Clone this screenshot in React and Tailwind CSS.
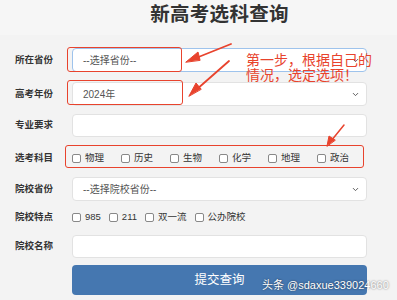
import { ChevronDown } from 'lucide-react';

const font = { fontFamily: '"Liberation Sans", "Noto Sans CJK SC", sans-serif' };

function Label({ children }) {
  return <div className="w-[57px] shrink-0 whitespace-nowrap text-[9.5px] font-bold text-[#333]">{children}</div>;
}

function Select({ value, focused }) {
  return (
    <div
      className={`flex h-[24px] flex-1 items-center justify-between rounded-[4px] border bg-white pl-[10px] pr-[6px] text-[10px] text-[#555] ${
        focused ? 'border-[#9ec3ec]' : 'border-[#e2e2e2]'
      }`}
    >
      <span>{value}</span>
      <ChevronDown size={9} strokeWidth={2.5} className="text-[#555]" />
    </div>
  );
}

function Box({ label, className = '' }) {
  return (
    <label className={`flex items-center gap-[4px] whitespace-nowrap text-[9.5px] text-[#333] ${className}`}>
      <span className="h-[9px] w-[9px] shrink-0 rounded-[2px] border border-[#888] bg-white" />
      {label}
    </label>
  );
}

export default function App() {
  return (
    <div className="relative h-[300px] w-[397px] overflow-hidden bg-[#f3f3f3]" style={font}>
      <div className="flex h-[35px] bg-[#f6f6f6] pl-[72px] pr-[30px]">
        <h1 className="flex-1 text-center text-[19.5px] font-semibold tracking-[0.3px] text-[#333]">新高考选科查询</h1>
      </div>

      <div className="flex flex-col pl-[15px] pr-[30px] pt-[13px]">
        <div className="flex items-center">
          <Label>所在省份</Label>
          <Select value="--选择省份--" focused />
        </div>
        <div className="mt-[10px] flex items-center">
          <Label>高考年份</Label>
          <Select value="2024年" />
        </div>
        <div className="mt-[8px] flex items-center">
          <Label>专业要求</Label>
          <div className="h-[23px] flex-1 rounded-[4px] border border-[#e2e2e2] bg-white" />
        </div>
        <div className="mt-[10px] flex h-[23px] items-center">
          <Label>选考科目</Label>
          <div className="flex">
            <Box label="物理" className="w-[49px]" />
            <Box label="历史" className="w-[49px]" />
            <Box label="生物" className="w-[49px]" />
            <Box label="化学" className="w-[49px]" />
            <Box label="地理" className="w-[49px]" />
            <Box label="政治" className="w-[49px]" />
          </div>
        </div>
        <div className="mt-[7px] flex items-center">
          <Label>院校省份</Label>
          <Select value="--选择院校省份--" />
        </div>
        <div className="mt-[5px] flex h-[22px] items-center">
          <Label>院校特点</Label>
          <div className="flex gap-[8px]">
            <Box label="985" />
            <Box label="211" />
            <Box label="双一流" />
            <Box label="公办院校" />
          </div>
        </div>
        <div className="mt-[7px] flex items-center">
          <Label>院校名称</Label>
          <div className="h-[23px] flex-1 rounded-[4px] border border-[#e2e2e2] bg-white" />
        </div>
        <div className="mt-[7px] flex">
          <div className="w-[57px] shrink-0" />
          <button className="h-[30px] flex-1 rounded-[4px] bg-[#4577b0] text-[12.5px] text-white">提交查询</button>
        </div>
      </div>

      {/* annotations */}
      <div className="absolute left-[67px] top-[47px] h-[25px] w-[115px] rounded-[3px] border-[1.5px] border-[#e8432d]" />
      <div className="absolute left-[67px] top-[80px] h-[25px] w-[116px] rounded-[3px] border-[1.5px] border-[#e8432d]" />
      <div className="absolute left-[65px] top-[145px] h-[23px] w-[299px] rounded-[3px] border-[1.5px] border-[#e8432d]" />
      <div className="absolute left-[246px] top-[53px] whitespace-nowrap text-[14px] leading-[15px] text-[#e8432d]">
        第一步，根据自己的
        <br />
        情况，选定选项！
      </div>
      <svg className="absolute left-0 top-0" width="397" height="300">
        <g fill="#e8432d" stroke="#e8432d" strokeLinecap="round">
          <path d="M231 44 L196 58" strokeWidth="1.8" fill="none" />
          <path d="M186 62 L198 52 L200 60 Z" />
          <path d="M229 61 L196 90" strokeWidth="1.8" fill="none" />
          <path d="M189 96 L196 83 L201 89 Z" />
          <path d="M344 125 L331 141" strokeWidth="1.5" fill="none" />
          <path d="M327 146 L329 136 L335 140 Z" />
        </g>
      </svg>
      <div className="absolute left-[262px] top-[277px] whitespace-nowrap text-[11px] text-white [text-shadow:0_0_2px_rgba(0,0,0,0.6)]">
        头条 @sdaxue339024660
      </div>
    </div>
  );
}
